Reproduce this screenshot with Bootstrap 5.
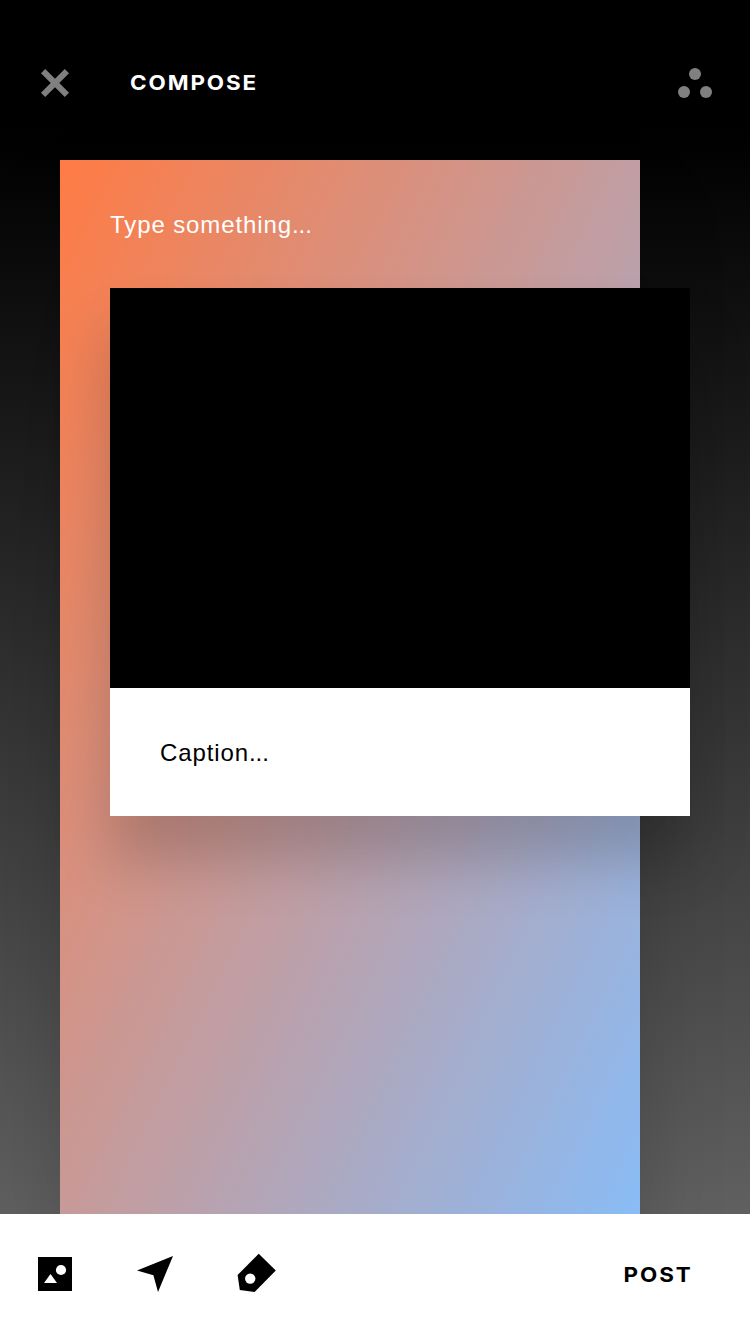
<!DOCTYPE html>
<html lang="en">
<head>
<meta charset="utf-8">
<meta name="viewport" content="width=device-width, initial-scale=1">
<title>Compose</title>
<link href="https://cdn.jsdelivr.net/npm/bootstrap@5.3.0/dist/css/bootstrap.min.css" rel="stylesheet">
<style>
  body { background: #000; }
  .screen { height: 1334px; background: linear-gradient(#000 130px, #606060 1214px); }
  .topbar { height: 160px; padding: 6px 30px 0 30px; }
  .label-caps { font: 700 20px/28px Inter, sans-serif; letter-spacing: 1.7px; transform: scaleX(1.12); transform-origin: left; }
  .icon-btn { width: 50px; height: 50px; }
  .topbar .icon-btn { color: #808080; }
  .page-title { margin-left: 50px; }
  .note { width: 580px; margin-left: 60px; color: #fff;
    background: linear-gradient(116deg, #ff7b44, #89bcf6);
    box-shadow: 0 50px 80px rgba(0,0,0,.18); }
  .prompt { font: 400 24px/32px "Liberation Sans", Arial, sans-serif; letter-spacing: .9px; }
  .dots { letter-spacing: -.1px; }
  .note > .prompt { height: 128px; padding: 49px 50px 0; }
  .attachment { width: 580px; margin-left: 50px; box-shadow: 0 45px 55px rgba(0,0,0,.19); }
  .photo { height: 400px; }
  .attachment .prompt { height: 128px; padding: 49px 50px 0; }
  .toolbar { height: 120px; padding: 0 57px 0 30px; z-index: 1; }
  .tools { gap: 50px; }
  .post-action { padding-top: 2px; transform-origin: right; }
</style>
</head>
<body>
<div class="screen d-flex flex-column overflow-hidden">
  <header class="topbar d-flex align-items-center flex-shrink-0">
    <button class="icon-btn btn p-0 border-0 d-flex" aria-label="Close">
      <svg width="50" height="50" viewBox="0 0 50 50" fill="none" stroke="currentColor" stroke-width="6"><path d="M13.1 13.1 36.9 36.9M36.9 13.1 13.1 36.9"/></svg>
    </button>
    <h1 class="page-title label-caps text-white mb-0">COMPOSE</h1>
    <button class="icon-btn btn p-0 border-0 d-flex ms-auto" aria-label="More">
      <svg width="50" height="50" viewBox="0 0 50 50" fill="currentColor"><circle cx="25" cy="16" r="6"/><circle cx="14" cy="34" r="6"/><circle cx="36" cy="34" r="6"/></svg>
    </button>
  </header>
  <main class="note flex-grow-1">
    <div class="prompt">Type something<span class="dots">...</span></div>
    <section class="attachment bg-white text-black">
      <div class="photo bg-black"></div>
      <div class="prompt">Caption<span class="dots">...</span></div>
    </section>
  </main>
  <footer class="toolbar bg-white text-black position-relative d-flex align-items-center justify-content-between flex-shrink-0">
    <div class="tools d-flex">
      <svg width="50" height="50" viewBox="0 0 50 50"><path d="M8 8h34v34H8z"/><circle cx="31" cy="21" r="5.1" fill="#fff"/><path d="M14 34h13l-6.5-9z" fill="#fff"/></svg>
      <svg width="50" height="50" viewBox="0 0 50 50"><path d="M7 21.5 43 7 28 43 23.4 26.2z"/></svg>
      <svg width="50" height="50" viewBox="0 0 50 50"><path d="M28.7 4.7 45.8 21.5 24.6 43 9.8 41 7.6 26z"/><circle cx="20.2" cy="29.6" r="5.2" fill="#fff"/></svg>
    </div>
    <div class="label-caps post-action">POST</div>
  </footer>
</div>
<script src="https://cdn.jsdelivr.net/npm/bootstrap@5.3.0/dist/js/bootstrap.bundle.min.js"></script>
</body>
</html>
